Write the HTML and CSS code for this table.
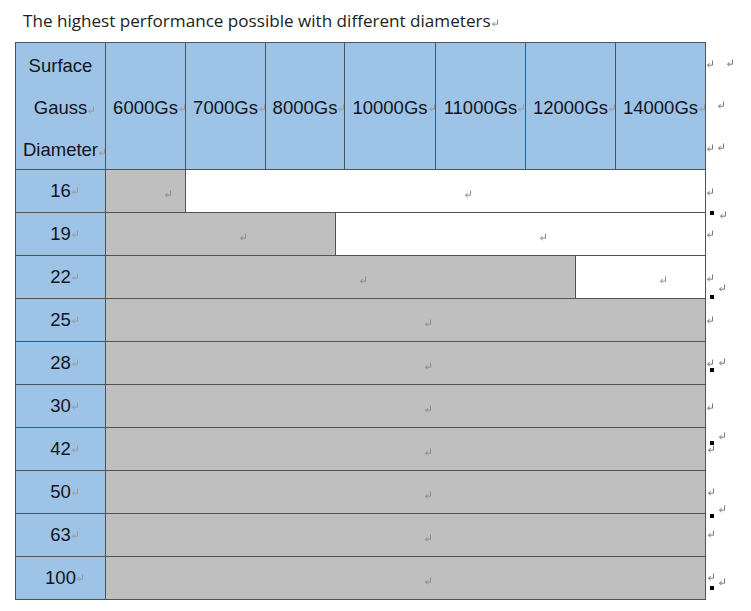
FILE: index.html
```html
<!DOCTYPE html>
<html>
<head>
<meta charset="utf-8">
<link rel="stylesheet" href="styles.css">
</head>
<body>
<svg class="defs" width="0" height="0"><symbol id="pm" viewBox="0 0 8 8"><path d="M6.5 0.5V5.2H1.6M3.6 3.1L1.5 5.2 3.6 7.3"/></symbol></svg>
<div class="page">
  <p class="title">The highest performance possible with different diameters<svg class="pm t"><use href="#pm"/></svg></p>
  <div class="grid">
    <div class="c h first"><span>Surface</span><span>Gauss<svg class="pm"><use href="#pm"/></svg></span><span>Diameter<svg class="pm"><use href="#pm"/></svg></span></div>
    <div class="c h">6000Gs<svg class="pm"><use href="#pm"/></svg></div>
    <div class="c h">7000Gs<svg class="pm"><use href="#pm"/></svg></div>
    <div class="c h s45">8000Gs<svg class="pm"><use href="#pm"/></svg></div>
    <div class="c h">10000Gs<svg class="pm"><use href="#pm"/></svg></div>
    <div class="c h">11000Gs<svg class="pm"><use href="#pm"/></svg></div>
    <div class="c h s89">12000Gs<svg class="pm"><use href="#pm"/></svg></div>
    <div class="c h">14000Gs<svg class="pm"><use href="#pm"/></svg></div>

    <div class="c h n">16<svg class="pm"><use href="#pm"/></svg></div>
    <div class="c g e"><svg class="pm"><use href="#pm"/></svg></div>
    <div class="c w e r3"><svg class="pm"><use href="#pm"/></svg></div>

    <div class="c h n">19<svg class="pm"><use href="#pm"/></svg></div>
    <div class="c g e r2to5"><svg class="pm"><use href="#pm"/></svg></div>
    <div class="c w e r5"><svg class="pm"><use href="#pm"/></svg></div>

    <div class="c h n">22<svg class="pm"><use href="#pm"/></svg></div>
    <div class="c g e r2to9"><svg class="pm"><use href="#pm"/></svg></div>
    <div class="c w e r9"><svg class="pm"><use href="#pm"/></svg></div>

    <div class="c h n">25<svg class="pm"><use href="#pm"/></svg></div>
    <div class="c g e full"><svg class="pm"><use href="#pm"/></svg></div>
    <div class="c h n">28<svg class="pm"><use href="#pm"/></svg></div>
    <div class="c g e full"><svg class="pm"><use href="#pm"/></svg></div>
    <div class="c h n">30<svg class="pm"><use href="#pm"/></svg></div>
    <div class="c g e full"><svg class="pm"><use href="#pm"/></svg></div>
    <div class="c h n">42<svg class="pm"><use href="#pm"/></svg></div>
    <div class="c g e full"><svg class="pm"><use href="#pm"/></svg></div>
    <div class="c h n">50<svg class="pm"><use href="#pm"/></svg></div>
    <div class="c g e full"><svg class="pm"><use href="#pm"/></svg></div>
    <div class="c h n">63<svg class="pm"><use href="#pm"/></svg></div>
    <div class="c g e full"><svg class="pm"><use href="#pm"/></svg></div>
    <div class="c h n">100<svg class="pm"><use href="#pm"/></svg></div>
    <div class="c g e full"><svg class="pm"><use href="#pm"/></svg></div>
  </div>

  <div class="marks">
    <svg class="pm o" style="left:706px;top:60px"><use href="#pm"/></svg>
    <svg class="pm o" style="left:726px;top:59px"><use href="#pm"/></svg>
    <svg class="pm o" style="left:717px;top:101px"><use href="#pm"/></svg>
    <svg class="pm o" style="left:706px;top:144px"><use href="#pm"/></svg>
    <svg class="pm o" style="left:717px;top:143px"><use href="#pm"/></svg>
    <svg class="pm o" style="left:706px;top:188px"><use href="#pm"/></svg>
    <i class="sq" style="left:710px;top:211px"></i>
    <svg class="pm o" style="left:719px;top:211px"><use href="#pm"/></svg>
    <svg class="pm o" style="left:706px;top:230px"><use href="#pm"/></svg>
    <svg class="pm o" style="left:706px;top:274px"><use href="#pm"/></svg>
    <svg class="pm o" style="left:718px;top:284px"><use href="#pm"/></svg>
    <i class="sq" style="left:710px;top:295px"></i>
    <svg class="pm o" style="left:706px;top:316px"><use href="#pm"/></svg>
    <svg class="pm o" style="left:706px;top:359px"><use href="#pm"/></svg>
    <svg class="pm o" style="left:718px;top:358px"><use href="#pm"/></svg>
    <i class="sq" style="left:710px;top:368px"></i>
    <svg class="pm o" style="left:706px;top:403px"><use href="#pm"/></svg>
    <svg class="pm o" style="left:718px;top:432px"><use href="#pm"/></svg>
    <i class="sq" style="left:710px;top:441px"></i>
    <svg class="pm o" style="left:707px;top:445px"><use href="#pm"/></svg>
    <svg class="pm o" style="left:707px;top:488px"><use href="#pm"/></svg>
    <svg class="pm o" style="left:718px;top:505px"><use href="#pm"/></svg>
    <i class="sq" style="left:710px;top:514px"></i>
    <svg class="pm o" style="left:707px;top:530px"><use href="#pm"/></svg>
    <svg class="pm o" style="left:707px;top:573px"><use href="#pm"/></svg>
    <svg class="pm o" style="left:718px;top:578px"><use href="#pm"/></svg>
    <i class="sq" style="left:710px;top:586px"></i>
  </div>
</div>
</body>
</html>
```

FILE: styles.css
```css
html, body {
  margin: 0;
  padding: 0;
  background: #ffffff;
}

.defs {
  position: absolute;
  width: 0;
  height: 0;
  overflow: hidden;
}

symbol path {
  fill: none;
  stroke: currentColor;
  stroke-width: 1;
}

.page {
  position: relative;
  width: 751px;
  height: 611px;
}

.title {
  margin: 0;
  height: 42px;
  box-sizing: border-box;
  padding: 11px 0 0 23px;
  font-family: "Open Sans", "Liberation Sans", sans-serif;
  font-size: 17.1px;
  line-height: 20px;
  color: #222222;
}

.pm {
  width: 8px;
  height: 8px;
  color: #9a9a9a;
  vertical-align: baseline;
}

.pm.t {
  color: #8a8a8a;
}

.grid {
  display: grid;
  margin-left: 15px;
  width: max-content;
  grid-template-columns: 89px 79px 79px 69px 8px 90px 89px 49px 39px 89px;
  grid-template-rows: 126px repeat(10, 42px);
  gap: 1px;
  padding: 1px;
  background: #4f5256;
}

.c {
  display: flex;
  align-items: center;
  justify-content: center;
  font-family: "Liberation Sans", Arial, sans-serif;
  font-size: 18.5px;
  color: #141420;
  white-space: nowrap;
  box-sizing: border-box;
}

.h .pm {
  margin-right: -8px;
}

.h {
  background: #9dc3e6;
  padding-top: 4px;
}

.n {
  padding-top: 0;
}

.g {
  background: #bfbfbf;
}

.w {
  background: #ffffff;
}

.first {
  flex-direction: column;
  line-height: 42px;
}

.s45 {
  grid-column: 4 / 6;
}

.s89 {
  grid-column: 8 / 10;
}

.r3 {
  grid-column: 3 / 11;
}

.r2to5 {
  grid-column: 2 / 5;
}

.r5 {
  grid-column: 5 / 11;
}

.r2to9 {
  grid-column: 2 / 9;
}

.r9 {
  grid-column: 9 / 11;
}

.full {
  grid-column: 2 / 11;
}

.e {
  padding-left: 44px;
  padding-top: 6px;
}

.e .pm {
  color: #8c8c8c;
}

.marks .pm.o {
  position: absolute;
  color: #7a7a7a;
}

.sq {
  position: absolute;
  width: 4px;
  height: 4px;
  background: #000000;
}
```
